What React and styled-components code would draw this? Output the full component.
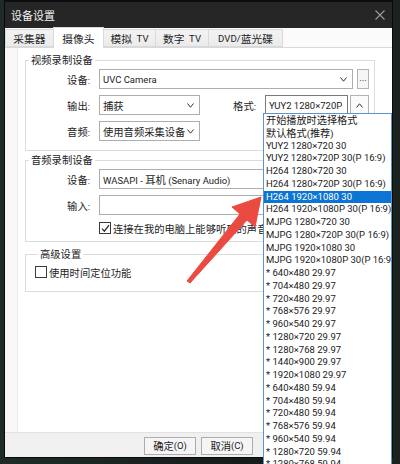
import React from 'react';
import styled, { createGlobalStyle } from 'styled-components';

const GlobalStyle = createGlobalStyle`
  html, body { margin: 0; padding: 0; background: #111716; }
  body { font-family: Roboto, "Noto Sans CJK SC", sans-serif; }
  * { box-sizing: border-box; }
`;

const Han = styled.span`
  font-family: "Noto Sans CJK SC", sans-serif;
  font-size: ${p => p.$r || 1.085}em;
`;

const HAN_RUN = /([\u2E80-\u9FFF\uF900-\uFAFF\uFF01-\uFF60]+)/;

const T = ({ children, r }) =>
  String(children)
    .split(HAN_RUN)
    .map((part, i) => (i % 2 ? <Han key={i} $r={r}>{part}</Han> : part));

const Screen = styled.div`
  position: relative;
  width: 400px;
  height: 464px;
  overflow: hidden;
  padding: 0 8px 7px 5px;
  background: linear-gradient(90deg, #1f2b28 0%, #151c1b 60%, #1b2220 100%);
`;

const Window = styled.div`
  display: flex;
  flex-direction: column;
  width: 387px;
  height: 457px;
  background: #fff;
  box-shadow: 0 0 0 1px #0a0a0a;
`;

const TitleBar = styled.div`
  display: flex;
  align-items: center;
  justify-content: space-between;
  height: 28px;
  border-top: 2px solid #0d0d0d;
  background: #262626;
  padding: 0 7px 0 6px;
  color: #f2f2f2;
  font-size: 10px;
`;

const CloseIcon = styled.svg`
  width: 10px;
  height: 10px;
`;

const TabStrip = styled.div`
  display: flex;
  align-items: flex-end;
  height: 20px;
  background: #fbfbfb;
  border-bottom: 1px solid #d9d9d9;
`;

const Tab = styled.div`
  display: flex;
  align-items: center;
  justify-content: center;
  width: ${p => p.$w}px;
  height: ${p => (p.$active ? 21 : 18)}px;
  margin-bottom: ${p => (p.$active ? -1 : 0)}px;
  margin-left: -1px;
  border: 1px solid #d9d9d9;
  border-bottom: ${p => (p.$active ? 'none' : '1px solid #d9d9d9')};
  background: ${p => (p.$active ? '#fff' : 'linear-gradient(#f3f3f3, #ebebeb)')};
  color: #222;
  font-size: 9.6px;
  white-space: pre;
  position: relative;
  z-index: ${p => (p.$active ? 1 : 0)};
  &:first-child { margin-left: 0; }
`;

const Body = styled.div`
  flex: 1;
  display: flex;
`;

const Gutter = styled.div`
  width: 13px;
  background: #f8f8f8;
  border-right: 1px solid #ebebeb;
`;

const Page = styled.div`
  flex: 1;
  display: flex;
  flex-direction: column;
  padding: 5px 0 0 7px;
  background: #fff;
  font-size: 9.5px;
  color: #1c1c1c;
`;

const Group = styled.fieldset`
  width: 350px;
  margin: ${p => p.$mt || 0}px 0 0 0;
  padding: ${p => p.$pt || 1}px 6px ${p => p.$pb || 9}px ${p => p.$pl || 0}px;
  border: 1px solid #dcdcdc;
  min-inline-size: 0;
`;

const Legend = styled.legend`
  margin-left: 3px;
  padding: 0 2px;
  line-height: 14px;
  color: #1c1c1c;
`;

const Rows = styled.div`
  display: flex;
  flex-direction: column;
  gap: 6px;
`;

const Row = styled.div`
  display: flex;
  align-items: center;
  height: ${p => p.$h || 20}px;
`;

const Label = styled.div`
  width: ${p => p.$w || 73}px;
  flex: none;
  padding-right: 9px;
  text-align: right;
  white-space: nowrap;
`;

const Field = styled.div`
  display: flex;
  align-items: center;
  justify-content: space-between;
  gap: 2px;
  width: ${p => p.$w}px;
  height: 20px;
  flex: none;
  padding: 0 5px 0 3px;
  border: 1px solid ${p => (p.$dark ? '#7a7a7a' : '#adadad')};
  background: #fff;
  white-space: nowrap;
  overflow: hidden;
`;

const FieldText = styled.span`
  overflow: hidden;
  white-space: nowrap;
`;

const SmallButton = styled.div`
  display: flex;
  align-items: center;
  justify-content: center;
  width: ${p => p.$w}px;
  height: 20px;
  flex: none;
  margin-left: ${p => p.$ml || 0}px;
  border: 1px solid #b3b3b3;
  background: ${p => p.$bg || '#f6f6f6'};
  color: #222;
  line-height: 1;
  padding-bottom: ${p => p.$pb || 0}px;
`;

const Check = styled.div`
  display: flex;
  align-items: center;
  justify-content: center;
  width: 12px;
  height: 12px;
  flex: none;
  border: 1px solid #3a3a3a;
  background: #fff;
`;

const CheckText = styled.span`
  margin-left: 2px;
  white-space: nowrap;
`;

const Footer = styled.div`
  display: flex;
  align-items: center;
  justify-content: center;
  gap: 5px;
  height: 25px;
  background: #f0f0f0;
  border-top: 1px solid #e2e2e2;
  padding-top: 1px;
  font-size: 9.5px;
`;

const DialogButton = styled.div`
  display: flex;
  align-items: center;
  justify-content: center;
  width: 52px;
  height: 18px;
  border: 1px solid #adadad;
  background: #f5f5f5;
  color: #1c1c1c;
  white-space: nowrap;
`;

const DropList = styled.div`
  position: absolute;
  left: 263px;
  top: 113px;
  width: 129px;
  height: 360px;
  border: 1px solid #5a93d2;
  background: #fff;
  overflow: hidden;
`;

const Item = styled.div`
  height: 12.75px;
  line-height: 12.75px;
  padding-left: 2px;
  font-size: 9.5px;
  white-space: nowrap;
  overflow: hidden;
  color: ${p => (p.$sel ? '#fff' : '#1a1a1a')};
  background: ${p => (p.$sel ? '#0b74d4' : 'transparent')};
`;

const Overlay = styled.svg`
  position: absolute;
  left: 0;
  top: 0;
  width: 400px;
  height: 464px;
  pointer-events: none;
`;

const Chevron = ({ up }) => (
  <svg width="7" height="5" viewBox="0 0 7 5" style={{ flex: 'none' }}>
    <path
      d={up ? 'M0.5 4.5 L3.5 0.8 L6.5 4.5' : 'M0.5 0.5 L3.5 4.2 L6.5 0.5'}
      fill="none"
      stroke="#333"
      strokeWidth="1"
    />
  </svg>
);

const Tick = () => (
  <svg width="9" height="9" viewBox="0 0 9 9">
    <path d="M1 4.6 L3.4 7.2 L8 1.2" fill="none" stroke="#2a2a2a" strokeWidth="1.2" />
  </svg>
);

const tabs = [
  { t: '采集器', w: 49 },
  { t: '摄像头', w: 51, active: true },
  { t: '模拟  TV', w: 53 },
  { t: '数字  TV', w: 54 },
  { t: 'DVD/蓝光碟', w: 75 },
];

const formats = [
  '开始播放时选择格式',
  '默认格式(推荐)',
  'YUY2 1280×720 30',
  'YUY2 1280×720P 30(P 16:9)',
  'H264 1280×720 30',
  'H264 1280×720P 30(P 16:9)',
  'H264 1920×1080 30',
  'H264 1920×1080P 30(P 16:9)',
  'MJPG 1280×720 30',
  'MJPG 1280×720P 30(P 16:9)',
  'MJPG 1920×1080 30',
  'MJPG 1920×1080P 30(P 16:9)',
  '* 640×480 29.97',
  '* 704×480 29.97',
  '* 720×480 29.97',
  '* 768×576 29.97',
  '* 960×540 29.97',
  '* 1280×720 29.97',
  '* 1280×768 29.97',
  '* 1440×900 29.97',
  '* 1920×1080 29.97',
  '* 640×480 59.94',
  '* 704×480 59.94',
  '* 720×480 59.94',
  '* 768×576 59.94',
  '* 960×540 59.94',
  '* 1280×720 59.94',
  '* 1280×768 59.94',
];

export default function App() {
  return (
    <>
      <GlobalStyle />
      <Screen>
        <Window>
          <TitleBar>
            <span><T r={1.1}>设备设置</T></span>
            <CloseIcon viewBox="0 0 10 10">
              <path d="M0.5 0.5 L9.5 9.5 M9.5 0.5 L0.5 9.5" stroke="#9a9a9a" strokeWidth="1.1" />
            </CloseIcon>
          </TitleBar>
          <TabStrip>
            {tabs.map(tab => (
              <Tab key={tab.t} $w={tab.w} $active={tab.active}><T r={1.12}>{tab.t}</T></Tab>
            ))}
          </TabStrip>
          <Body>
            <Gutter />
            <Page>
              <Group $pb={9}>
                <Legend><T>视频录制设备</T></Legend>
                <Rows>
                  <Row>
                    <Label><T>设备</T>:</Label>
                    <Field $w={254}><FieldText>UVC Camera</FieldText><Chevron /></Field>
                    <SmallButton $w={12} $ml={4} $pb={3}>...</SmallButton>
                  </Row>
                  <Row>
                    <Label><T>输出</T>:</Label>
                    <Field $w={101}><FieldText><T>捕获</T></FieldText><Chevron /></Field>
                    <Label $w={65}><T>格式</T>:</Label>
                    <Field $w={83} $dark><FieldText>YUY2 1280×720P 30(P 16:9)</FieldText></Field>
                    <SmallButton $w={19} $ml={2} $bg="#fbfbfb"><Chevron up /></SmallButton>
                  </Row>
                  <Row>
                    <Label><T>音频</T>:</Label>
                    <Field $w={101}><FieldText><T>使用音频采集设备</T></FieldText><Chevron /></Field>
                  </Row>
                </Rows>
              </Group>
              <Group $mt={2} $pb={6}>
                <Legend><T>音频录制设备</T></Legend>
                <Rows>
                  <Row>
                    <Label><T>设备</T>:</Label>
                    <Field $w={254}><FieldText><T>WASAPI - 耳机 (Senary Audio)</T></FieldText><Chevron /></Field>
                  </Row>
                  <Row>
                    <Label><T>输入</T>:</Label>
                    <Field $w={254} />
                  </Row>
                  <Row $h={14}>
                    <Label />
                    <Check><Tick /></Check>
                    <CheckText><T>连接在我的电脑上能够听到的声音</T></CheckText>
                  </Row>
                </Rows>
              </Group>
              <Group $mt={5} $pt={3} $pb={12} $pl={9}>
                <Legend><T>高级设置</T></Legend>
                <Row $h={14}>
                  <Check />
                  <CheckText><T>使用时间定位功能</T></CheckText>
                </Row>
              </Group>
            </Page>
          </Body>
          <Footer>
            <DialogButton><T>确定</T>(O)</DialogButton>
            <DialogButton><T>取消</T>(C)</DialogButton>
          </Footer>
        </Window>

        <DropList>
          {formats.map((f, i) => (
            <Item key={i} $sel={i === 6}><T r={1.07}>{f}</T></Item>
          ))}
        </DropList>

        <Overlay viewBox="0 0 400 464">
          <polygon
            points="261,197 255,227 247,220 190,283 187,281 240,214 232,207"
            fill="#ea4a3f"
            stroke="#ea4a3f"
            strokeWidth="1"
            strokeLinejoin="round"
          />
        </Overlay>
      </Screen>
    </>
  );
}
